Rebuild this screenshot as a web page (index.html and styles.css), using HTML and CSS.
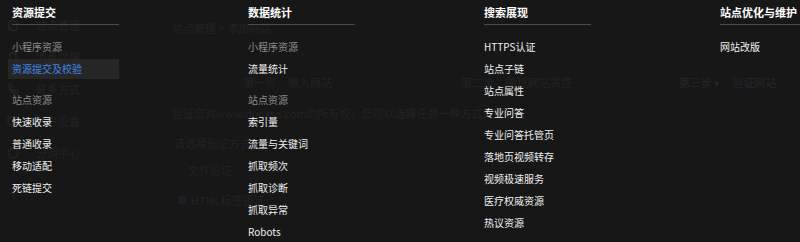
FILE: index.html
```html
<!DOCTYPE html>
<html lang="zh-CN">
<head>
<meta charset="utf-8">
<title>资源提交</title>
<link rel="stylesheet" href="styles.css">
</head>
<body>
<div class="page">
  <aside class="side">
    <div class="side-item"><svg class="ico" viewBox="0 0 14 14"><path d="M2 6 L7 2 L12 6 M3 6 V12 H11 V6" fill="none" stroke="currentColor" stroke-width="1.4"/></svg><span>站点管理</span></div>
    <div class="side-item"><svg class="ico" viewBox="0 0 14 14"><path d="M4 10 V6 a3 3 0 0 1 6 0 V10 Z M2 11 H12" fill="none" stroke="currentColor" stroke-width="1.4"/></svg><span>消息提醒</span></div>
    <div class="side-item"><svg class="ico" viewBox="0 0 14 14"><path d="M3 2 L5 2 L6 5 L4.5 6 Q6 9 8 9.5 L9 8 L12 9 L12 11 Q10 13 6 10 Q2 6 3 2 Z" fill="none" stroke="currentColor" stroke-width="1.3"/></svg><span>联系方式</span></div>
    <div class="side-item"><svg class="ico" viewBox="0 0 14 14"><rect x="2" y="3" width="10" height="7" fill="none" stroke="currentColor" stroke-width="1.3"/><path d="M5 12 H9" stroke="currentColor" stroke-width="1.3"/></svg><span>账户设置</span></div>
    <div class="side-item"><svg class="ico" viewBox="0 0 14 14"><circle cx="7" cy="7" r="5" fill="none" stroke="currentColor" stroke-width="1.4"/></svg><span>分润中心</span></div>
  </aside>
  <main class="main">
    <div class="crumb">站点管理 &gt; 添加网站</div>
    <div class="steps">
      <div class="step"><span>第一步</span><span>输入网站</span></div>
      <div class="step"><span>第二步</span><span>验证网站属性</span></div>
      <div class="step step-on"><span>第三步 ▾</span><span>验证网站</span></div>
    </div>
    <p class="desc">验证您对www.ducasa.com的所有权，您可以选择任意一种方式进行验证</p>
    <p class="choose">请选择验证方式</p>
    <p class="tab">文件验证</p>
    <p class="radio"><span class="dot"></span>HTML标签验证</p>
  </main>

  <nav class="menu">
    <section class="col">
      <h3 class="col-title">资源提交</h3>
      <div class="group">
        <div class="label">小程序资源</div>
        <a class="item active">资源提交及校验</a>
      </div>
      <div class="group">
        <div class="label">站点资源</div>
        <a class="item">快速收录</a>
        <a class="item">普通收录</a>
        <a class="item">移动适配</a>
        <a class="item">死链提交</a>
      </div>
    </section>
    <section class="col">
      <h3 class="col-title">数据统计</h3>
      <div class="group">
        <div class="label">小程序资源</div>
        <a class="item">流量统计</a>
      </div>
      <div class="group">
        <div class="label">站点资源</div>
        <a class="item">索引量</a>
        <a class="item">流量与关键词</a>
        <a class="item">抓取频次</a>
        <a class="item">抓取诊断</a>
        <a class="item">抓取异常</a>
        <a class="item">Robots</a>
      </div>
    </section>
    <section class="col">
      <h3 class="col-title">搜索展现</h3>
      <div class="group">
        <a class="item">HTTPS认证</a>
        <a class="item">站点子链</a>
        <a class="item">站点属性</a>
        <a class="item">专业问答</a>
        <a class="item">专业问答托管页</a>
        <a class="item">落地页视频转存</a>
        <a class="item">视频极速服务</a>
        <a class="item">医疗权威资源</a>
        <a class="item">热议资源</a>
      </div>
    </section>
    <section class="col">
      <h3 class="col-title">站点优化与维护</h3>
      <div class="group">
        <a class="item">网站改版</a>
      </div>
    </section>
  </nav>
</div>
</body>
</html>
```

FILE: styles.css
```css
html, body {
  margin: 0;
  padding: 0;
  background: #171717;
  overflow: hidden;
}
body {
  width: 800px;
  height: 242px;
  font-family: "Microsoft YaHei", "Noto Sans CJK SC", "Liberation Sans", sans-serif;
}
.page {
  position: relative;
  display: flex;
  height: 242px;
  overflow: hidden;
  color: #232323;
  font-size: 11px;
}

/* ghost page beneath the menu */
.side {
  flex: 0 0 150px;
  padding-top: 16px;
  display: flex;
  flex-direction: column;
  gap: 14px;
}
.side-item {
  display: flex;
  align-items: center;
  height: 18px;
  gap: 16px;
  padding-left: 6px;
  white-space: nowrap;
}
.ico {
  width: 14px;
  height: 14px;
  color: #252525;
}
.main {
  flex: 1 1 auto;
  min-width: 0;
  padding-left: 22px;
  padding-top: 20px;
  white-space: nowrap;
}
.crumb {
  height: 16px;
  line-height: 16px;
}
.steps {
  display: flex;
  margin-top: 36px;
  margin-left: 71px;
  height: 20px;
  align-items: center;
}
.step {
  display: flex;
  flex: 0 0 218px;
  gap: 12px;
}
.step-on {
  color: #25252e;
}
.desc {
  margin: 13px 0 0;
  line-height: 16px;
}
.choose {
  margin: 14px 0 0 2px;
  line-height: 16px;
}
.tab {
  margin: 11px 0 0 16px;
  line-height: 16px;
}
.radio {
  margin: 14px 0 0 6px;
  display: flex;
  align-items: center;
  gap: 5px;
  line-height: 16px;
}
.dot {
  width: 6px;
  height: 6px;
  border-radius: 50%;
  border: 1px solid #22222e;
  background: #1e1e28;
}

/* mega menu overlay */
.menu {
  position: absolute;
  top: 0;
  left: 0;
  right: 0;
  bottom: 0;
  display: grid;
  grid-template-columns: repeat(4, 236px);
  padding-left: 12px;
}
.col {
  display: flex;
  flex-direction: column;
}
.col-title {
  margin: 0;
  width: 107px;
  height: 24px;
  line-height: 24px;
  font-size: 11px;
  font-weight: bold;
  color: #ffffff;
  border-bottom: 1px solid #4a4a4a;
  white-space: nowrap;
}
.group {
  display: flex;
  flex-direction: column;
  margin-top: 9px;
}
.group:first-of-type {
  margin-top: 11px;
}
.label {
  height: 22px;
  line-height: 22px;
  font-size: 10px;
  color: #8c8c8c;
}
.item {
  height: 22px;
  line-height: 22px;
  font-size: 10px;
  color: #f0f0f0;
  white-space: nowrap;
}
.item.active {
  height: 20px;
  line-height: 20px;
  margin: 1px 0 1px -4px;
  padding-left: 4px;
  width: 107px;
  background: #262626;
  color: #3f86e6;
}
```
